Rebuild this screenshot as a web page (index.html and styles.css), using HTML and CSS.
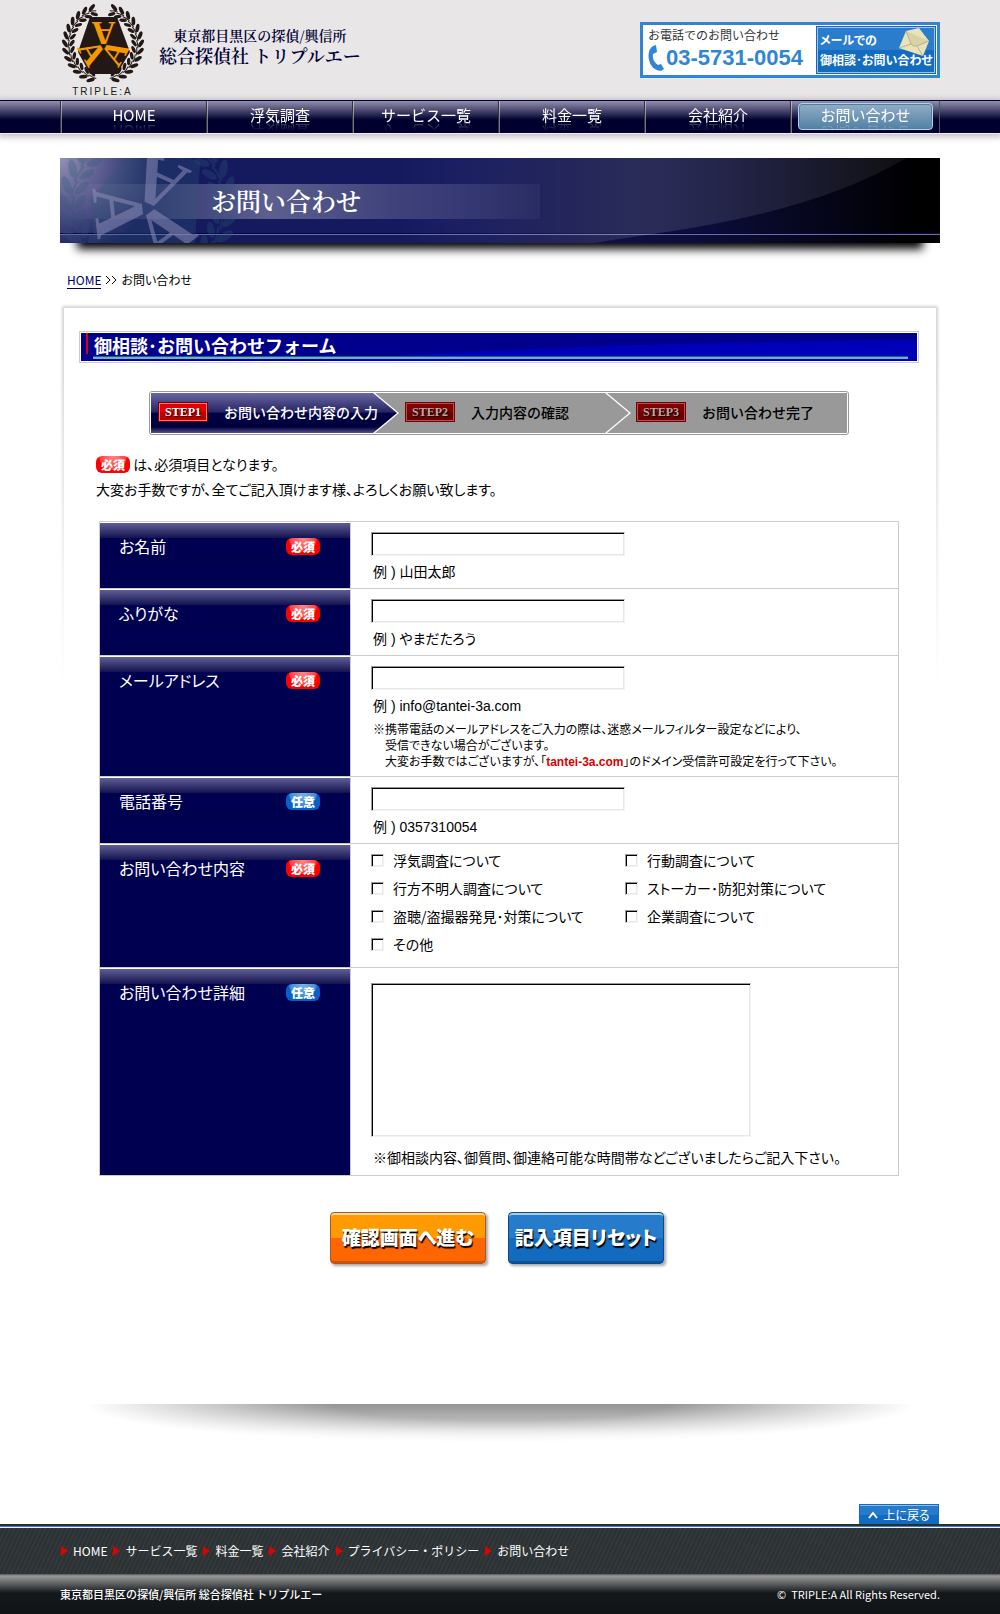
FILE: index.html
```html
<!DOCTYPE html>
<html lang="ja">
<head>
<meta charset="utf-8">
<meta name="viewport" content="width=device-width, initial-scale=1">
<title>お問い合わせ | 総合探偵社 トリプルエー</title>
<link rel="stylesheet" href="styles.css">
</head>
<body id="top">
<svg class="defs" aria-hidden="true">
  <defs>
    <linearGradient id="sheen"><stop offset=".4" stop-color="#fff" stop-opacity="0"/><stop offset=".7" stop-color="#fff" stop-opacity=".12"/><stop offset="1" stop-color="#fff" stop-opacity=".06"/></linearGradient>
    <g id="sprig">
      <path d="M77 45 Q77 41 75.500 37" fill="none" stroke="currentColor" stroke-width="1"/>
      <ellipse cx="80" cy="40" rx="1.900" ry="4.300" transform="rotate(32 80 40)"/>
      <ellipse cx="73" cy="40" rx="1.700" ry="3.800" transform="rotate(-38 73 40)"/>
    </g>
    <g id="branch">
      <use href="#sprig" transform="rotate(-70 42 42)"/>
      <use href="#sprig" transform="rotate(-58 42 42)"/>
      <use href="#sprig" transform="rotate(-46 42 42)"/>
      <use href="#sprig" transform="rotate(-34 42 42)"/>
      <use href="#sprig" transform="rotate(-22 42 42)"/>
      <use href="#sprig" transform="rotate(-10 42 42)"/>
      <use href="#sprig" transform="rotate(2 42 42)"/>
      <use href="#sprig" transform="rotate(14 42 42)"/>
      <use href="#sprig" transform="rotate(26 42 42)"/>
      <use href="#sprig" transform="rotate(38 42 42)"/>
      <use href="#sprig" transform="rotate(50 42 42)"/>
      <use href="#sprig" transform="rotate(62 42 42)"/>
      <use href="#sprig" transform="rotate(74 42 42)"/>
    </g>
    <g id="emblem">
      <g class="emblem-dark">
        <use href="#branch"/>
        <use href="#branch" transform="translate(84 0) scale(-1 1)"/>
        <path d="M29 15H56L69 50L56 72H29L17 50Z"/>
      </g>
      <g class="emblem-letters">
        <text x="42.500" y="68" transform="rotate(180 42.500 44)">A</text>
        <text x="42.500" y="68" transform="rotate(60 42.500 44)">A</text>
        <text x="42.500" y="68" transform="rotate(-60 42.500 44)">A</text>
      </g>
    </g>
  </defs>
</svg>

<header class="site-header">
  <div class="wrap header-inner">
    <a class="brand" href="#">
      <span class="brand-mark">
        <svg class="emblem" viewBox="0 0 84 84" aria-hidden="true"><use href="#emblem"/></svg>
        <span class="brand-name">TRIPLE:A</span>
      </span>
      <span class="brand-text">
        <span class="brand-area">東京都目黒区の探偵/興信所</span>
        <span class="brand-title">総合探偵社 トリプルエー</span>
      </span>
    </a>
    <div class="contact">
      <div class="tel">
        <span class="tel-label">お電話でのお問い合わせ</span>
        <span class="tel-line">
          <svg class="tel-icon" viewBox="0 0 16 26" aria-hidden="true"><path d="M5 1L8 0L9 7L5 9Q4 16 10 20L13 19L16 24L13 26Q3 25 1 15Q-1 5 5 1Z"/></svg>
          <span class="tel-number">03-5731-0054</span>
        </span>
      </div>
      <a class="mail" href="#form">
        <span>メールでの</span>
        <span>御相談･お問い合わせ</span>
        <svg class="mail-icon" viewBox="0 0 32 30" aria-hidden="true"><path d="M8 4L21 1L31 14L25 29L1 21Z" fill="#e8e2bd"/><path d="M8 4L13 17Q15 20 19 19L31 14" fill="#d9d2a6" stroke="#b9b285"/><path d="M1 21L13 17M19 19L25 29" stroke="#bbb48a" fill="none"/></svg>
      </a>
    </div>
  </div>
</header>

<nav class="gnav" aria-label="メイン">
  <ul class="wrap gnav-list">
    <li><a href="#"><span>HOME</span></a></li>
    <li><a href="#"><span>浮気調査</span></a></li>
    <li><a href="#"><span>サービス一覧</span></a></li>
    <li><a href="#"><span>料金一覧</span></a></li>
    <li><a href="#"><span>会社紹介</span></a></li>
    <li><a class="current" href="#" aria-current="page"><span>お問い合わせ</span></a></li>
  </ul>
</nav>

<main class="wrap">
  <div class="banner">
    <div class="banner-face">
      <svg class="banner-art" viewBox="0 0 880 85" preserveAspectRatio="none" aria-hidden="true"><path d="M0 0H846Q760 52 600 75Q550 82 535 85H0Z" fill="url(#sheen)"/></svg>
      <svg class="banner-emblem" viewBox="0 0 84 84" aria-hidden="true"><use href="#emblem"/></svg>
      <h1 class="banner-title">お問い合わせ</h1>
    </div>
  </div>

  <nav class="crumbs" aria-label="パンくず"><a href="#">HOME</a><svg viewBox="0 0 12 10" aria-hidden="true"><path d="M1 1L5 5L1 9M7 1L11 5L7 9"/></svg><span>お問い合わせ</span></nav>

  <div class="panel">
    <div class="panel-inner">
      <div class="heading">
        <div class="heading-face">
          <svg class="heading-art" viewBox="0 0 836 28" preserveAspectRatio="none" aria-hidden="true"><path d="M240 28Q480 10 836 7V28Z"/></svg>
          <h2>御相談･お問い合わせフォーム</h2>
        </div>
      </div>

      <ol class="steps">
        <li class="step active"><b>STEP1</b><span>お問い合わせ内容の入力</span></li>
        <li class="step"><b>STEP2</b><span>入力内容の確認</span></li>
        <li class="step"><b>STEP3</b><span>お問い合わせ完了</span></li>
      </ol>

      <p class="intro"><span class="tag required">必須</span> は、必須項目となります。<br>大変お手数ですが、全てご記入頂けます様、よろしくお願い致します。</p>

      <form id="form">
        <div class="table">
          <div class="row">
            <div class="row-label"><label for="name">お名前</label><span class="tag required">必須</span></div>
            <div class="row-field"><input class="text" type="text" id="name"><p class="hint">例 ) 山田太郎</p></div>
          </div>
          <div class="row">
            <div class="row-label"><label for="kana">ふりがな</label><span class="tag required">必須</span></div>
            <div class="row-field"><input class="text" type="text" id="kana"><p class="hint">例 ) やまだたろう</p></div>
          </div>
          <div class="row">
            <div class="row-label"><label for="email">メールアドレス</label><span class="tag required">必須</span></div>
            <div class="row-field"><input class="text" type="email" id="email"><p class="hint">例 ) info@tantei-3a.com</p>
              <p class="note">※携帯電話のメールアドレスをご入力の際は、迷惑メールフィルター設定などにより、<br>受信できない場合がございます。<br>大変お手数ではございますが、「<strong>tantei-3a.com</strong>」のドメイン受信許可設定を行って下さい。</p></div>
          </div>
          <div class="row">
            <div class="row-label"><label for="phone">電話番号</label><span class="tag optional">任意</span></div>
            <div class="row-field"><input class="text" type="tel" id="phone"><p class="hint">例 ) 0357310054</p></div>
          </div>
          <div class="row">
            <div class="row-label"><span id="topic">お問い合わせ内容</span><span class="tag required">必須</span></div>
            <div class="row-field checks" role="group" aria-labelledby="topic">
              <label><input type="checkbox">浮気調査について</label>
              <label><input type="checkbox">行動調査について</label>
              <label><input type="checkbox">行方不明人調査について</label>
              <label><input type="checkbox">ストーカー･防犯対策について</label>
              <label><input type="checkbox">盗聴/盗撮器発見･対策について</label>
              <label><input type="checkbox">企業調査について</label>
              <label><input type="checkbox">その他</label>
            </div>
          </div>
          <div class="row">
            <div class="row-label"><label for="detail">お問い合わせ詳細</label><span class="tag optional">任意</span></div>
            <div class="row-field detail"><textarea id="detail"></textarea><p class="hint">※御相談内容、御質問、御連絡可能な時間帯などございましたらご記入下さい。</p></div>
          </div>
        </div>
        <div class="actions">
          <button class="btn go" type="submit">確認画面へ進む</button>
          <button class="btn reset" type="reset">記入項目リセット</button>
        </div>
      </form>
    </div>
  </div>

  <div class="floor-shadow"></div>
  <div class="to-top"><a href="#top"><svg viewBox="0 0 10 8" aria-hidden="true"><path d="M1 7L5 2L9 7"/></svg>上に戻る</a></div>
</main>

<footer>
  <div class="foot-nav">
    <ul class="wrap">
      <li><a href="#">HOME</a></li>
      <li><a href="#">サービス一覧</a></li>
      <li><a href="#">料金一覧</a></li>
      <li><a href="#">会社紹介</a></li>
      <li><a href="#">プライバシー・ポリシー</a></li>
      <li><a href="#">お問い合わせ</a></li>
    </ul>
  </div>
  <div class="foot-base">
    <div class="wrap">
      <span>東京都目黒区の探偵/興信所 総合探偵社 トリプルエー</span>
      <small>©&nbsp; TRIPLE:A All Rights Reserved.</small>
    </div>
  </div>
</footer>
</body>
</html>
```
FILE: styles.css
```css
* { box-sizing: border-box; }

body {
  margin: 0;
  background: #fff;
  color: #000;
  font: 14px/20px "Noto Sans CJK JP", sans-serif;
  font-feature-settings: "palt";
}

h1, h2, p, ul, ol { margin: 0; padding: 0; }
ul, ol { list-style: none; }
a { color: inherit; text-decoration: none; }
.wrap { width: min(880px, 100% - 40px); margin: 0 auto; }
.defs { position: absolute; width: 0; height: 0; }

/* emblem */
.emblem-dark { fill: currentColor; }
.emblem-letters {
  fill: var(--letters);
  font: bold 33px "Liberation Serif", serif;
  text-anchor: middle;
}

/* header */
.site-header { background: #e8e6e7; }
.header-inner {
  display: flex;
  justify-content: space-between;
  align-items: flex-start;
  min-height: 100px;
}
.brand { display: flex; gap: 14px; color: #000033; }
.brand-mark {
  display: flex;
  flex-direction: column;
  align-items: center;
  width: 85px;
  padding-top: 2px;
  color: #231815;
}
.emblem { width: 84px; height: 84px; --letters: #f39800; }
.brand-name {
  font: 10px/12px "Liberation Sans", Arial, sans-serif;
  letter-spacing: 2px;
}
.brand-text {
  display: flex;
  flex-direction: column;
  align-items: center;
  padding-top: 25px;
  font-family: "Noto Serif CJK JP", "Noto Sans CJK JP", serif;
  font-weight: 600;
  font-feature-settings: normal;
}
.brand-area { font-size: 14px; line-height: 20px; }
.brand-title { font-size: 18px; line-height: 20px; }

.contact {
  display: flex;
  justify-content: space-between;
  width: 300px;
  height: 56px;
  margin-top: 22px;
  padding: 1px;
  border: 3px solid #3186d3;
  background: #fff;
}
.tel { padding: 0 4px; }
.tel-label {
  display: block;
  color: #333;
  font-size: 12px;
  line-height: 18px;
  font-feature-settings: normal;
}
.tel-line { display: flex; align-items: center; gap: 2px; color: #3186d3; }
.tel-icon { width: 16px; height: 26px; fill: currentColor; }
.tel-number {
  font: bold 22px/28px "Liberation Sans", Arial, sans-serif;
  white-space: nowrap;
}
.mail {
  position: relative;
  display: flex;
  flex-direction: column;
  justify-content: center;
  width: 120px;
  padding-left: 3px;
  border: 1px solid #1568b8;
  outline: 1px solid #9cc4ea;
  outline-offset: -2px;
  background: linear-gradient(#2a7dcd 50%, #146cc0 50%);
  color: #fff;
  font-size: 12px;
  font-weight: 700;
  line-height: 20px;
  white-space: nowrap;
}
.mail-icon { position: absolute; top: 0; right: 5px; width: 32px; height: 30px; }

/* global navigation */
.gnav {
  height: 33px;
  border-top: 1px solid #000033;
  background: linear-gradient(#9290ae, #00002f 19px);
  box-shadow: 0 1px 0 #f3ecf3, 0 2px 6px 2px rgba(60, 30, 70, .3);
}
.gnav-list {
  display: grid;
  grid-template-columns: repeat(5, 146fr) 150fr;
}
.gnav-list li {
  height: 32px;
  padding-left: 2px;
  background: linear-gradient(to right, #333 1px, rgba(255, 255, 255, .45) 1px, rgba(255, 255, 255, .45) 2px, transparent 2px);
}
.gnav-list li:last-child { border-right: 1px solid #555; }
.gnav-list a {
  display: flex;
  justify-content: center;
  height: 27px;
  margin: 2px 6px;
  color: #fff;
  font-size: 15px;
  line-height: 24px;
  font-feature-settings: normal;
}
.gnav-list span {
  height: 24px;
  -webkit-box-reflect: below -8px linear-gradient(transparent 50%, rgba(255, 255, 255, .4));
}
.gnav-list .current {
  border: 1px solid #b3d2e8;
  border-radius: 4px;
  box-shadow: inset 0 0 0 1px #4f7fa3;
  background: linear-gradient(#93aec6, #4f80a4);
  line-height: 22px;
}

/* banner */
.banner { position: relative; margin-top: 25px; }
.banner::before {
  content: "";
  position: absolute;
  inset: 60px 20px 0;
  background: #000;
  box-shadow: 0 3px 9px 3px #000;
}
.banner-face {
  position: relative;
  display: flex;
  align-items: center;
  height: 85px;
  padding-bottom: 2px;
  overflow: hidden;
  background:
    linear-gradient(#04044a, #04044a) 0 75px / 100% 1px no-repeat,
    linear-gradient(#6f6f9d, #6f6f9d) 0 76px / 100% 1px no-repeat,
    linear-gradient(to right, rgba(255, 255, 255, 0), rgba(255, 255, 255, .3) 210px, rgba(255, 255, 255, .04)) 0 26px / 480px 35px no-repeat,
    radial-gradient(circle at 0 0, #9291b5, rgba(21, 25, 94, 0) 100px),
    linear-gradient(to right, #15195e 45%, #0b0c36 75%, #000 97%);
}
.banner-art { position: absolute; inset: 0; width: 100%; height: 100%; }
.banner-emblem {
  position: absolute;
  left: -4px;
  top: -46px;
  width: 184px;
  height: 184px;
  transform: rotate(24deg);
  color: rgba(45, 90, 115, .3);
  --letters: rgba(150, 145, 190, .5);
}
.banner-title {
  position: relative;
  padding-left: 151px;
  color: #fff;
  font: 600 25px/36px "Noto Serif CJK JP", "Noto Sans CJK JP", serif;
  font-feature-settings: normal;
}

.crumbs {
  display: flex;
  align-items: center;
  gap: 4px;
  margin: 27px 7px 14px;
  font-size: 12px;
}
.crumbs a { border-bottom: 1px solid #000066; color: #000066; line-height: 16px; }
.crumbs svg { width: 12px; height: 10px; fill: none; stroke: #000; }

/* panel */
.panel {
  padding: 4px;
  background:
    linear-gradient(rgba(255, 255, 255, 0) 40px, #fff 380px),
    linear-gradient(#fff, rgba(255, 255, 255, 0) 4px),
    linear-gradient(to right, #fff, #d4d4d4 4px, #d4d4d4 calc(100% - 4px), #fff);
}
.panel-inner { padding: 23px 17px 1px 15px; background: #fff; }
.heading { padding: 1px; border: 1px solid #ccc; }
.heading-face {
  position: relative;
  height: 28px;
  padding-left: 13px;
  background: #00008c;
}
.heading-face::before {
  content: "";
  position: absolute;
  left: 5px;
  top: 0;
  width: 2px;
  height: 21px;
  background: #e00000;
}
.heading-face::after {
  content: "";
  position: absolute;
  left: 12px;
  right: 9px;
  bottom: 2px;
  height: 3px;
  background: linear-gradient(#1a5f86 33%, #6fb0c4 33%);
}
.heading-art { position: absolute; inset: 0; width: 100%; height: 100%; fill: #0000b8; }
.heading h2 {
  position: relative;
  color: #fff;
  font-size: 18px;
  line-height: 24px;
  font-feature-settings: normal;
}

.steps {
  display: flex;
  height: 44px;
  max-width: 700px;
  margin: 28px auto 17px;
  padding: 1px;
  border: 1px solid #999;
  border-radius: 3px;
  isolation: isolate;
}
.step {
  position: relative;
  display: flex;
  flex: 1;
  align-items: center;
  gap: 16px;
  padding-bottom: 2px;
  background: #999;
  font-weight: 500;
  white-space: nowrap;
  font-feature-settings: normal;
}
.step:nth-child(1) { flex: 0 0 248px; margin-right: -24px; padding-left: 7px; color: #fff; }
.step:nth-child(2) { flex: 0 0 256px; margin-right: -24px; padding-left: 30px; }
.step:nth-child(3) { padding-left: 29px; }
.step:nth-child(1), .step:nth-child(2) {
  z-index: 1;
  background: #fff;
  clip-path: polygon(0 0, calc(100% - 24px) 0, 100% 50%, calc(100% - 24px) 100%, 0 100%);
}
.step:nth-child(1) { z-index: 2; }
.step::before {
  content: "";
  position: absolute;
  inset: 0 2px 0 0;
  z-index: -1;
  background: #999;
  clip-path: polygon(0 0, calc(100% - 24px) 0, 100% 50%, calc(100% - 24px) 100%, 0 100%);
}
.step:nth-child(3)::before { content: none; }
.step.active::before { background: linear-gradient(#6a66a5, #262462 48%, #000046 50%, #00003c 85%, #55528f); }
.step b {
  width: 50px;
  border: 1px solid #7a0000;
  box-shadow: inset 0 0 0 1px #a55;
  background: linear-gradient(#850000 50%, #6d0000 50%);
  color: #b5a9a9;
  font: bold 12px/18px "Liberation Serif", serif;
  text-align: center;
  text-shadow: 1px 1px 1px #000;
}
.step.active b {
  background: linear-gradient(#e30000 50%, #bd0000 50%);
  box-shadow: inset 0 0 0 1px #f77;
  color: #fff;
}

.intro { margin: 0 17px 19px; line-height: 25px; }
.tag {
  display: inline-block;
  width: 34px;
  border-radius: 6px;
  color: #fff;
  font-size: 12px;
  font-weight: 900;
  line-height: 17px;
  text-align: center;
}
.required { background: radial-gradient(ellipse at 50% 0, #ff8a8a, #ff3c3c 55%, #f00 60%); }
.optional { background: radial-gradient(ellipse at 50% 0, #79b4ea, #3d8cdb 55%, #0560c8 60%); }

/* form */
.table {
  margin: 0 20px;
  border: 1px solid #ccc;
  border-bottom: 0;
}
.row { display: flex; border-bottom: 1px solid #ccc; }
.row-label {
  display: flex;
  flex: 0 0 251px;
  justify-content: space-between;
  align-items: flex-start;
  padding: 11px 30px 0 19px;
  border-top: 1px solid #fff;
  border-right: 1px solid #ccc;
  background: linear-gradient(#605e96, #15134f 15px, #000050 15px);
  color: #fff;
  font-size: 16px;
  line-height: 24px;
}
.row-label .tag { margin-top: 4px; }
.row-field { flex: 1; min-width: 0; padding: 10px 20px 6px; }
.text, textarea {
  display: block;
  width: 254px;
  max-width: 100%;
  height: 24px;
  padding: 2px 4px;
  border: 1px solid;
  border-color: #999 #f3f3f3 #f3f3f3 #999;
  border-radius: 0;
  box-shadow: inset 1px 1px 0 #000, inset -1px -1px 0 #e7e7e7;
  background: #fff;
  font: inherit;
}
.hint { margin: 6px 2px 0; font-family: "Liberation Sans", "Noto Sans CJK JP", sans-serif; }
.note {
  margin: 5px 2px 0;
  padding-left: 12px;
  font-size: 12px;
  line-height: 16px;
  text-indent: -12px;
}
.note strong { color: #d80000; font-family: "Liberation Sans", Arial, sans-serif; }
.checks {
  display: grid;
  grid-template-columns: 254px 1fr;
  grid-auto-rows: 28px;
  padding: 2px 20px 9px;
}
.checks label { display: flex; align-items: center; gap: 9px; }
.checks input {
  appearance: none;
  width: 13px;
  height: 13px;
  margin: 0;
  border: 1px solid;
  border-color: #999 #f3f3f3 #f3f3f3 #999;
  box-shadow: inset 1px 1px 0 #000, inset -1px -1px 0 #e7e7e7;
}
.checks input:checked { background: #000050; }
.detail { padding: 15px 20px 7px; }
.detail textarea { width: 380px; height: 154px; resize: none; }
.detail .hint { margin-top: 11px; }

.actions { display: flex; justify-content: center; gap: 22px; margin: 36px 24px 0 20px; }
.btn {
  width: 156px;
  height: 52px;
  padding: 0 0 3px;
  border: 1px solid;
  border-radius: 4px;
  color: #fff;
  font: 900 19px/26px "Noto Sans CJK JP", sans-serif;
  font-feature-settings: "palt";
  text-shadow: 1px 2px 1px #000;
  white-space: nowrap;
}
.go {
  border-color: #a85a2c;
  background: linear-gradient(#ff9a00 50%, #ff6600 50%);
  box-shadow: inset 0 2px 0 #ffd9a0, inset 0 -2px 0 #d15200, 2px 2px 3px rgba(0, 0, 0, .35);
}
.reset {
  border-color: #0d4a86;
  background: linear-gradient(#267bcb 50%, #136bc0 50%);
  box-shadow: inset 0 2px 0 #a6cdf0, inset 0 -2px 0 #0b539b, 2px 2px 3px rgba(0, 0, 0, .35);
}

.floor-shadow {
  height: 40px;
  margin: 135px 25px 0;
  background: linear-gradient(#949494, #c4c4c4 55%, #fff);
  -webkit-mask-image: radial-gradient(ellipse 50% 100% at 50% 0, #000 40%, transparent);
  mask-image: radial-gradient(ellipse 50% 100% at 50% 0, #000 40%, transparent);
}
.to-top { display: flex; justify-content: flex-end; margin-top: 60px; }
.to-top a {
  display: flex;
  align-items: center;
  justify-content: center;
  gap: 5px;
  width: 80px;
  height: 20px;
  margin-right: 1px;
  border: 1px solid #146cc0;
  border-bottom: 0;
  box-shadow: inset 0 1px 0 #8fbce8;
  background: linear-gradient(#267bcb 50%, #136bc0 50%);
  color: #fff;
  font-size: 12px;
}
.to-top svg { width: 10px; height: 8px; fill: none; stroke: #fff; stroke-width: 2; }

/* footer */
footer { color: #fff; font-size: 12px; font-feature-settings: normal; }
.foot-nav {
  height: 50px;
  padding-top: 4px;
  background:
    linear-gradient(#2a2f31 2px, #2f87d8 2px, #2f87d8 3px, #f4f4f4 3px, #f4f4f4 4px, transparent 4px),
    repeating-linear-gradient(115deg, #2c3133 0 2px, #33383a 2px 4px);
}
.foot-nav ul { display: flex; gap: 5px; align-items: center; height: 46px; }
.foot-nav a { display: flex; align-items: center; gap: 5px; }
.foot-nav a::before {
  content: "";
  margin-left: 1px;
  border: 5px solid transparent;
  border-left: 7px solid #e00000;
  border-right: 0;
}
.foot-base { height: 40px; background: linear-gradient(#555, #999 2px, #14181b 19px, #101417); }
.foot-base .wrap { display: flex; justify-content: space-between; align-items: center; height: 40px; }
.foot-base span, .foot-base small { font-size: 11px; }
.foot-base span { font-weight: 500; }
```
